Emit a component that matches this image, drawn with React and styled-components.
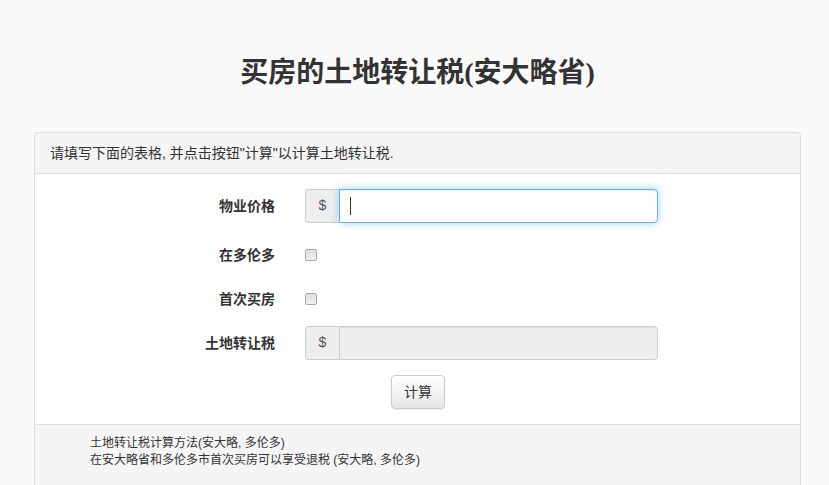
import React from "react";
import styled, { createGlobalStyle } from "styled-components";

const Global = createGlobalStyle`
  html, body { margin: 0; padding: 0; background: #fafafa; }
  body {
    font-family: "Liberation Sans", "Noto Sans CJK SC", sans-serif;
    font-size: 14px;
    line-height: 1.42857;
    color: #333;
  }
  * { box-sizing: border-box; }
`;

const Page = styled.div`
  padding: 57px 28px 0 34px;
`;

const Title = styled.h1`
  margin: 0 0 44px;
  text-align: center;
  font-family: "Liberation Serif", "Noto Sans CJK SC", serif;
  font-size: 28px;
  font-weight: 700;
  line-height: 31px;
  color: #333;
`;

const Panel = styled.div`
  background: #fff;
  border: 1px solid #ddd;
  border-radius: 4px;
  box-shadow: 0 1px 1px rgba(0, 0, 0, 0.05);
  overflow: hidden;
`;

const PanelHeading = styled.div`
  background: #f5f5f5;
  border-bottom: 1px solid #ddd;
  padding: 10px 15px;
  line-height: 20px;
  font-size: 14px;
  color: #333;
`;

const PanelBody = styled.div`
  padding: 15px 15px 15px 14px;
  display: flex;
  flex-direction: column;
  gap: 15px;
`;

const Row = styled.div`
  display: grid;
  grid-template-columns: 226px 353px;
  column-gap: 30px;
  align-items: ${(p) => (p.$check ? "start" : "center")};
  height: ${(p) => p.$h}px;
`;

const Label = styled.label`
  text-align: right;
  font-weight: 700;
  font-size: 14px;
  line-height: 20px;
  color: #333;
  padding-top: ${(p) => (p.$check ? "7px" : "0")};
`;

const Group = styled.div`
  position: relative;
  display: flex;
  height: 34px;
`;

const Addon = styled.span`
  width: 34px;
  flex: none;
  display: flex;
  align-items: center;
  justify-content: center;
  background: #eee;
  border: 1px solid #ccc;
  border-right: 0;
  border-radius: 4px 0 0 4px;
  color: #555;
  font-size: 14px;
`;

const Input = styled.input`
  flex: 1;
  min-width: 0;
  height: 34px;
  padding: 6px 12px;
  font-family: inherit;
  font-size: 14px;
  color: #555;
  background: ${(p) => (p.disabled ? "#eee" : "#fff")};
  border: 1px solid ${(p) => (p.$focus ? "#66afe9" : "#ccc")};
  border-radius: 0 4px 4px 0;
  outline: none;
  box-shadow: ${(p) =>
    p.$focus
      ? "inset 0 1px 1px rgba(0,0,0,.075), 0 0 8px rgba(102,175,233,.6)"
      : "inset 0 1px 1px rgba(0,0,0,.075)"};
  caret-color: transparent;
`;

const Caret = styled.span`
  position: absolute;
  left: 45px;
  top: 8px;
  width: 1px;
  height: 18px;
  background: #333;
  pointer-events: none;
`;

const CheckCell = styled.div`
  padding-top: 11px;
  display: flex;
`;

const Check = styled.input.attrs({ type: "checkbox" })`
  appearance: none;
  -webkit-appearance: none;
  width: 12px;
  height: 12px;
  margin: 0;
  border: 1px solid #a8a8a8;
  border-radius: 2px;
  background: linear-gradient(to bottom, #dedede, #f0f0f0);
`;

const ButtonRow = styled.div`
  display: flex;
  justify-content: center;
  padding-left: 2px;
`;

const Button = styled.button`
  height: 34px;
  padding: 6px 12px;
  font-family: inherit;
  font-size: 14px;
  line-height: 20px;
  color: #333;
  background: linear-gradient(to bottom, #fff 0, #e6e6e6 100%);
  border: 1px solid #ccc;
  border-radius: 4px;
  text-shadow: 0 1px 0 #fff;
  box-shadow: inset 0 1px 0 rgba(255,255,255,.15), 0 1px 1px rgba(0,0,0,.075);
`;

const PanelFooter = styled.div`
  background: #f5f5f5;
  border-top: 1px solid #ddd;
  padding: 10px 15px 40px 55px;
  font-size: 12px;
  line-height: 17px;
  color: #333;
`;

export default function App() {
  return (
    <>
      <Global />
      <Page>
        <Title>买房的土地转让税(安大略省)</Title>
        <Panel>
          <PanelHeading>请填写下面的表格, 并点击按钮"计算"以计算土地转让税.</PanelHeading>
          <PanelBody>
            <Row $h={34}>
              <Label>物业价格</Label>
              <Group>
                <Addon>$</Addon>
                <Input $focus defaultValue="" />
                <Caret />
              </Group>
            </Row>
            <Row $h={29} $check>
              <Label $check>在多伦多</Label>
              <CheckCell><Check /></CheckCell>
            </Row>
            <Row $h={29} $check>
              <Label $check>首次买房</Label>
              <CheckCell><Check /></CheckCell>
            </Row>
            <Row $h={34}>
              <Label>土地转让税</Label>
              <Group>
                <Addon>$</Addon>
                <Input disabled />
              </Group>
            </Row>
            <ButtonRow>
              <Button>计算</Button>
            </ButtonRow>
          </PanelBody>
          <PanelFooter>
            土地转让税计算方法(安大略, 多伦多)
            <br />
            在安大略省和多伦多市首次买房可以享受退税 (安大略, 多伦多)
          </PanelFooter>
        </Panel>
      </Page>
    </>
  );
}
